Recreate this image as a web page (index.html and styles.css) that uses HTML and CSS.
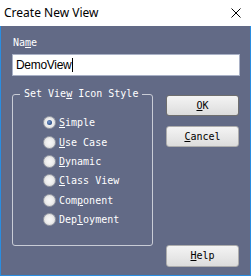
FILE: index.html
```html
<!DOCTYPE html>
<html>
<head>
<meta charset="utf-8">
<link rel="stylesheet" href="styles.css">
</head>
<body>
<div class="window">
  <div class="titlebar">
    <span class="title">Create New View</span>
    <svg class="close" width="10" height="10" viewBox="0 0 10 10"><path d="M0.5 0.5 L9.5 9.5 M9.5 0.5 L0.5 9.5" stroke="#000" stroke-width="1" fill="none"/></svg>
  </div>
  <div class="content">
    <div class="label">Na<u>m</u>e</div>
    <div class="input"><span class="value">DemoView</span><span class="caret"></span></div>
    <div class="row">
      <fieldset class="group">
        <legend class="legend">Set Vie<u>w</u> Icon Style</legend>
        <div class="radios">
          <div class="radio"><span class="dot checked"></span><span><u>S</u>imple</span></div>
          <div class="radio"><span class="dot"></span><span><u>U</u>se Case</span></div>
          <div class="radio"><span class="dot"></span><span><u>D</u>ynamic</span></div>
          <div class="radio"><span class="dot"></span><span><u>C</u>lass View</span></div>
          <div class="radio"><span class="dot"></span><span>Com<u>p</u>onent</span></div>
          <div class="radio"><span class="dot"></span><span>Dep<u>l</u>oyment</span></div>
        </div>
      </fieldset>
      <div class="buttons">
        <div class="btn default"><u>O</u>K</div>
        <div class="btn"><u>C</u>ancel</div>
        <div class="btn help"><u>H</u>elp</div>
      </div>
    </div>
  </div>
</div>
</body>
</html>
```
FILE: styles.css
```css
html, body {
  margin: 0;
  padding: 0;
  background: #ffffff;
}
.window {
  width: 251px;
  height: 276px;
  box-sizing: border-box;
  border: 1px solid #2a8de0;
  border-top: none;
  background: #626a86;
  display: flex;
  flex-direction: column;
}
.titlebar {
  height: 26px;
  background: #ffffff;
  display: flex;
  align-items: center;
  justify-content: space-between;
  padding: 0 10px 0 3px;
  margin: 0 -1px 0 -1px;
  border-left: 1px solid #ffffff;
}
.title {
  font-family: "Noto Sans", sans-serif;
  font-size: 12px;
  color: #000;
  line-height: 14px;
  margin-top: -1px;
}
.close {
  display: block;
}
.content {
  padding: 11px 10px 0 11px;
  font-family: "DejaVu Sans Mono", monospace;
  font-size: 10px;
  color: #ffffff;
}
u {
  text-decoration: underline;
  text-underline-offset: 1px;
}
.label {
  line-height: 12px;
  height: 12px;
  padding-left: 1px;
}
.input {
  margin-top: 5px;
  height: 22px;
  box-sizing: border-box;
  border: 1px solid #a9b1c6;
  background: #ffffff;
  display: flex;
  align-items: center;
  padding-left: 3px;
}
.value {
  font-family: "Liberation Sans", sans-serif;
  font-size: 12px;
  color: #000;
  letter-spacing: -0.3px;
}
.caret {
  width: 1px;
  height: 14px;
  background: #000;
  margin-left: 1px;
}
.row {
  margin-top: 12px;
  display: flex;
  gap: 13px;
  height: 179px;
}
.group {
  align-self: flex-start;
  width: 141px;
  box-sizing: border-box;
  margin: 0;
  padding: 13px 7px 16px 7px;
  border: 1px solid #c9ccd6;
  border-radius: 3px;
  min-width: 0;
}
.legend {
  padding: 0 4px;
  line-height: 12px;
  color: #ffffff;
}
.radios {
  padding-left: 23px;
}
.radio {
  height: 19.4px;
  display: flex;
  align-items: center;
  gap: 3px;
}
.dot {
  width: 13px;
  height: 13px;
  box-sizing: border-box;
  border-radius: 50%;
  border: 1px solid #9a9ea8;
  background: radial-gradient(circle at 50% 50%, #f8f8f8 0, #efefef 45%, #cfcfcf 100%);
  display: flex;
  align-items: center;
  justify-content: center;
  flex: none;
}
.dot.checked::after {
  content: "";
  width: 5px;
  height: 5px;
  border-radius: 50%;
  background: radial-gradient(circle at 40% 40%, #7a9bd0 0, #2a4d86 70%, #1d3663 100%);
}
.buttons {
  display: flex;
  flex-direction: column;
  width: 73px;
  padding-top: 7px;
  box-sizing: border-box;
}
.btn {
  height: 21px;
  box-sizing: border-box;
  border: 1px solid #adadad;
  border-radius: 3px;
  background: linear-gradient(#f4f4f4, #e6e6e6 60%, #dcdcdc);
  color: #000;
  display: flex;
  align-items: center;
  justify-content: center;
  line-height: 12px;
  margin-bottom: 10px;
}
.btn.default {
  border-color: #6e6e6e;
}
.btn.help {
  margin-top: auto;
  margin-bottom: 0;
  height: 22px;
}
```
